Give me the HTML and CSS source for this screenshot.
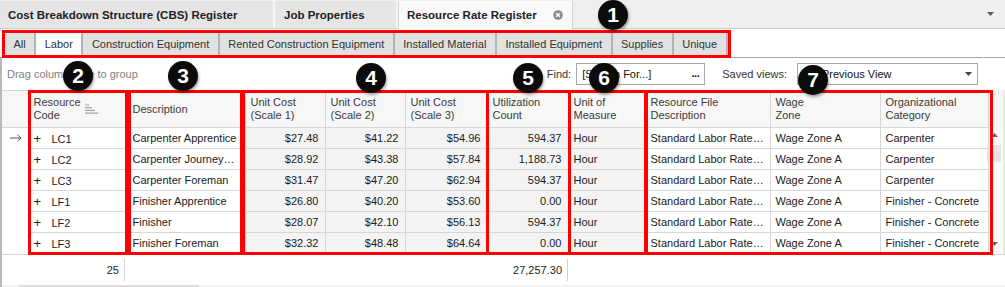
FILE: index.html
```html
<!DOCTYPE html>
<html>
<head>
  <title>Resource Rate Register</title>
  <link rel="stylesheet" href="styles.css">
</head>

<body>
  <div class="screen">
    <div class="doc-tabs">
      <div class="doc-tab cbs">Cost Breakdown Structure (CBS) Register</div>
      <div class="doc-tab job">Job Properties</div>
      <div class="doc-tab active">
        <span>Resource Rate Register</span>
        <svg class="close" width="10" height="10" viewBox="0 0 10 10">
          <circle cx="5" cy="5" r="4.8" fill="#8c8c8c"/>
          <path d="M3.2 3.2 L6.8 6.8 M6.8 3.2 L3.2 6.8" stroke="#fff" stroke-width="1.4"/>
        </svg>
      </div>
      <svg class="tabs-menu" width="7" height="4" viewBox="0 0 7 4"><path d="M0 0 H7 L3.5 4 Z" fill="#5a5a5a"/></svg>
    </div>

    <div class="cat-tabs">
      <div class="cat-tab">All</div>
      <div class="cat-tab current">Labor</div>
      <div class="cat-tab">Construction Equipment</div>
      <div class="cat-tab">Rented Construction Equipment</div>
      <div class="cat-tab">Installed Material</div>
      <div class="cat-tab">Installed Equipment</div>
      <div class="cat-tab">Supplies</div>
      <div class="cat-tab">Unique</div>
    </div>

    <div class="panel">
      <div class="toolbar">
        <span class="group-hint">Drag column here to group</span>
        <span class="find-label">Find:</span>
        <div class="find-box"><span>[Search For...]</span><span class="dots">...</span></div>
        <span class="views-label">Saved views:</span>
        <div class="views-box">
          <span>Previous View</span>
          <svg width="7" height="4" viewBox="0 0 7 4"><path d="M0 0 H7 L3.5 4 Z" fill="#444"/></svg>
        </div>
      </div>

      <div class="grid-area">
        <table class="grid">
          <colgroup>
            <col style="width:26px"><col style="width:99px"><col style="width:118px">
            <col style="width:80px"><col style="width:80px"><col style="width:82px">
            <col style="width:81px"><col style="width:77px"><col style="width:125px">
            <col style="width:110px"><col style="width:108px">
          </colgroup>
          <thead>
            <tr>
              <th class="ind"></th>
              <th>
                <div class="head-sort">
                  <span>Resource<br>Code</span>
                  <svg width="13" height="10" viewBox="0 0 13 10">
                    <path d="M0 1 H4 M0 3.7 H7 M0 6.4 H10 M0 9.1 H13" stroke="#a3a3a3" stroke-width="1.2"/>
                  </svg>
                </div>
              </th>
              <th>Description</th>
              <th>Unit Cost<br>(Scale 1)</th>
              <th>Unit Cost<br>(Scale 2)</th>
              <th>Unit Cost<br>(Scale 3)</th>
              <th>Utilization<br>Count</th>
              <th>Unit of<br>Measure</th>
              <th>Resource File<br>Description</th>
              <th>Wage<br>Zone</th>
              <th>Organizational<br>Category</th>
            </tr>
          </thead>
          <tbody>
            <tr>
              <td class="ind">
                <svg width="12" height="8" viewBox="0 0 12 8"><path d="M0 4 H11 M7.5 0.8 L11 4 L7.5 7.2" stroke="#555" stroke-width="1" fill="none"/></svg>
              </td>
              <td><span class="expand">+</span>LC1</td>
              <td>Carpenter Apprentice</td>
              <td class="ro num">$27.48</td><td class="ro num">$41.22</td><td class="ro num">$54.96</td>
              <td class="ro num">594.37</td><td class="ro">Hour</td>
              <td>Standard Labor Rate…</td><td>Wage Zone A</td><td>Carpenter</td>
            </tr>
            <tr>
              <td class="ind"></td>
              <td><span class="expand">+</span>LC2</td>
              <td>Carpenter Journey…</td>
              <td class="ro num">$28.92</td><td class="ro num">$43.38</td><td class="ro num">$57.84</td>
              <td class="ro num">1,188.73</td><td class="ro">Hour</td>
              <td>Standard Labor Rate…</td><td>Wage Zone A</td><td>Carpenter</td>
            </tr>
            <tr>
              <td class="ind"></td>
              <td><span class="expand">+</span>LC3</td>
              <td>Carpenter Foreman</td>
              <td class="ro num">$31.47</td><td class="ro num">$47.20</td><td class="ro num">$62.94</td>
              <td class="ro num">594.37</td><td class="ro">Hour</td>
              <td>Standard Labor Rate…</td><td>Wage Zone A</td><td>Carpenter</td>
            </tr>
            <tr>
              <td class="ind"></td>
              <td><span class="expand">+</span>LF1</td>
              <td>Finisher Apprentice</td>
              <td class="ro num">$26.80</td><td class="ro num">$40.20</td><td class="ro num">$53.60</td>
              <td class="ro num">0.00</td><td class="ro">Hour</td>
              <td>Standard Labor Rate…</td><td>Wage Zone A</td><td>Finisher - Concrete</td>
            </tr>
            <tr>
              <td class="ind"></td>
              <td><span class="expand">+</span>LF2</td>
              <td>Finisher</td>
              <td class="ro num">$28.07</td><td class="ro num">$42.10</td><td class="ro num">$56.13</td>
              <td class="ro num">594.37</td><td class="ro">Hour</td>
              <td>Standard Labor Rate…</td><td>Wage Zone A</td><td>Finisher - Concrete</td>
            </tr>
            <tr>
              <td class="ind"></td>
              <td><span class="expand">+</span>LF3</td>
              <td>Finisher Foreman</td>
              <td class="ro num">$32.32</td><td class="ro num">$48.48</td><td class="ro num">$64.64</td>
              <td class="ro num">0.00</td><td class="ro">Hour</td>
              <td>Standard Labor Rate…</td><td>Wage Zone A</td><td>Finisher - Concrete</td>
            </tr>
          </tbody>
        </table>

        <div class="vscroll">
          <div class="vscroll-head"></div>
          <div class="vscroll-track">
            <svg class="arrow-up" width="7" height="4" viewBox="0 0 7 4"><path d="M0 4 H7 L3.5 0 Z" fill="#666"/></svg>
            <div class="vthumb"></div>
            <svg class="arrow-down" width="7" height="4" viewBox="0 0 7 4"><path d="M0 0 H7 L3.5 4 Z" fill="#666"/></svg>
          </div>
        </div>
      </div>

      <div class="summary">
        <div class="sum-cell code-sum">25</div>
        <div class="sum-cell util-sum">27,257.30</div>
      </div>
      <div class="hscroll"><div class="hthumb"></div></div>
    </div>

    <!-- annotation boxes -->
    <div class="callout c1"></div>
    <div class="callout c2"></div>
    <div class="callout c3"></div>
    <div class="callout c4"></div>
    <div class="callout c5"></div>
    <div class="callout c6"></div>
    <div class="callout c7"></div>

    <div class="badge b1">1</div>
    <div class="badge b2">2</div>
    <div class="badge b3">3</div>
    <div class="badge b4">4</div>
    <div class="badge b5">5</div>
    <div class="badge b6">6</div>
    <div class="badge b7">7</div>
  </div>
</body>
</html>
```

FILE: styles.css
```css
body {
  margin: 0;
  font-family: 'Liberation Sans', Arial, sans-serif;
  font-size: 11px;
  color: #1b1b1b;
  background: #fff;
}
.screen {
  position: relative;
  width: 1005px;
  height: 287px;
  overflow: hidden;
}

/* document tabs */
.doc-tabs {
  display: flex;
  align-items: stretch;
  height: 28px;
  background: #efefef;
  border-bottom: 1px solid #cdcdcd;
}
.doc-tab {
  display: flex;
  align-items: center;
  box-sizing: border-box;
  padding: 0 8px;
  margin-top: 1px;
  font-weight: bold;
  font-size: 11.5px;
  color: #222;
  background: #e5e5e5;
  border-right: 2px solid #f5f5f5;
}
.doc-tab.cbs {
  width: 275px;
}
.doc-tab.job {
  width: 123px;
  padding-left: 9px;
}
.doc-tab.active {
  width: 175px;
  justify-content: space-between;
  background: #f9f9f9;
  border-left: 1px solid #d2d2d2;
  border-right: 1px solid #d2d2d2;
  margin-bottom: -1px;
  padding-right: 9px;
}
.tabs-menu {
  margin: 12px 11px 0 auto;
}

/* category tabs */
.cat-tabs {
  display: flex;
  height: 27px;
  margin-top: 1px;
  padding-left: 5px;
  border-bottom: 1px solid #a9a9a9;
}
.cat-tab {
  display: flex;
  align-items: center;
  padding: 0 8.5px;
  background: #e1e1e1;
  color: #333;
  border-right: 2px solid #b3b3b3;
}
.cat-tab.current {
  background: #fbfbfb;
}

/* panel */
.panel {
  border-left: 2px solid #b9b9b9;
}
.toolbar {
  display: flex;
  align-items: center;
  height: 32px;
  padding-left: 5px;
}
.group-hint {
  flex: 1;
  color: #808080;
}
.find-label {
  color: #333;
  margin-right: 5px;
}
.find-box,
.views-box {
  display: flex;
  align-items: center;
  justify-content: space-between;
  box-sizing: border-box;
  height: 22px;
  border: 1px solid #a8a8a8;
  background: #fff;
  padding: 0 5px;
  color: #111;
}
.find-box {
  width: 129px;
}
.find-box .dots {
  font-weight: bold;
  letter-spacing: -0.5px;
  margin-top: -3px;
}
.views-label {
  color: #333;
  margin: 0 10px 0 17px;
}
.views-box {
  width: 181px;
  margin-right: 27px;
  padding-left: 24px;
}

/* grid */
.grid-area {
  display: flex;
}
.grid {
  border-collapse: collapse;
  table-layout: fixed;
  width: 986px;
}
.grid th,
.grid td {
  border: 1px solid #d6d6d6;
  padding: 0 5px;
  white-space: nowrap;
  overflow: hidden;
}
.grid thead tr {
  height: 37px;
}
.grid tbody tr {
  height: 21px;
}
.grid th {
  background: #f7f7f7;
  font-weight: normal;
  text-align: left;
  color: #3a3a3a;
  line-height: 13px;
}
.grid th:first-child,
.grid td:first-child {
  border-left: none;
}
.grid td.ind {
  border-top: none;
  border-bottom: none;
  padding: 0 0 0 8px;
  background: #fff;
}
.grid td.ind svg {
  display: block;
}
.grid td.ro {
  background: #f3f3f3;
}
.grid td.num {
  text-align: right;
  padding-right: 6px;
}
.expand {
  display: inline-block;
  width: 18px;
  font-size: 13px;
  color: #222;
}
.head-sort {
  display: flex;
  align-items: center;
}
.head-sort svg {
  margin: -1px 0 0 4px;
}

.vscroll {
  width: 17px;
  flex: none;
  background: #fbfbfb;
  border-right: 3px solid #e9e9e9;
  box-sizing: border-box;
}
.vscroll-head {
  height: 37px;
  background: #f7f7f7;
}
.vscroll-track {
  position: relative;
  height: 126px;
  display: flex;
  flex-direction: column;
  align-items: center;
}
.arrow-up {
  margin: 6px 0 0 -2px;
}
.vthumb {
  width: 14px;
  margin: 8px 0 0 -3px;
  height: 17px;
  background: #e6e6e6;
}
.arrow-down {
  margin: auto 0 7px -2px;
}

/* summary row */
.summary {
  display: flex;
  height: 31px;
  box-sizing: border-box;
  padding-top: 4px;
  border-top: 1px solid #d6d6d6;
}
.sum-cell {
  height: 22px;
  line-height: 22px;
  text-align: right;
  padding-right: 5px;
  box-sizing: border-box;
  border-right: 1px solid #d2d2d2;
  color: #222;
}
.code-sum {
  width: 123px;
}
.util-sum {
  width: 443px;
}
.hscroll {
  height: 3px;
  background: #f3f3f3;
  padding-left: 17px;
}
.hthumb {
  width: 180px;
  height: 3px;
  background: #dddddd;
}

/* annotations */
.callout {
  position: absolute;
  border: 3px solid #ff0000;
  box-sizing: border-box;
  pointer-events: none;
}
.c1 { left: 2px; top: 30px; width: 729px; height: 28px; }
.c2 { left: 28px; top: 90px; width: 100px; height: 165px; }
.c3 { left: 128px; top: 90px; width: 115px; height: 165px; }
.c4 { left: 242px; top: 90px; width: 247px; height: 165px; }
.c5 { left: 486px; top: 90px; width: 85px; height: 165px; }
.c6 { left: 568px; top: 90px; width: 79px; height: 165px; }
.c7 { left: 645px; top: 90px; width: 348px; height: 165px; }

.badge {
  position: absolute;
  width: 30px;
  height: 30px;
  border-radius: 50%;
  background: #0b0b0b;
  color: #fff;
  font-weight: bold;
  font-size: 21px;
  line-height: 30px;
  text-align: center;
  box-shadow: 1px 2px 3px rgba(0, 0, 0, 0.35);
}
.b1 { left: 598px; top: 0; }
.b2 { left: 63px; top: 61px; }
.b3 { left: 168px; top: 61px; }
.b4 { left: 356px; top: 63px; }
.b5 { left: 513px; top: 63px; }
.b6 { left: 589px; top: 63px; }
.b7 { left: 798px; top: 65px; }
```
